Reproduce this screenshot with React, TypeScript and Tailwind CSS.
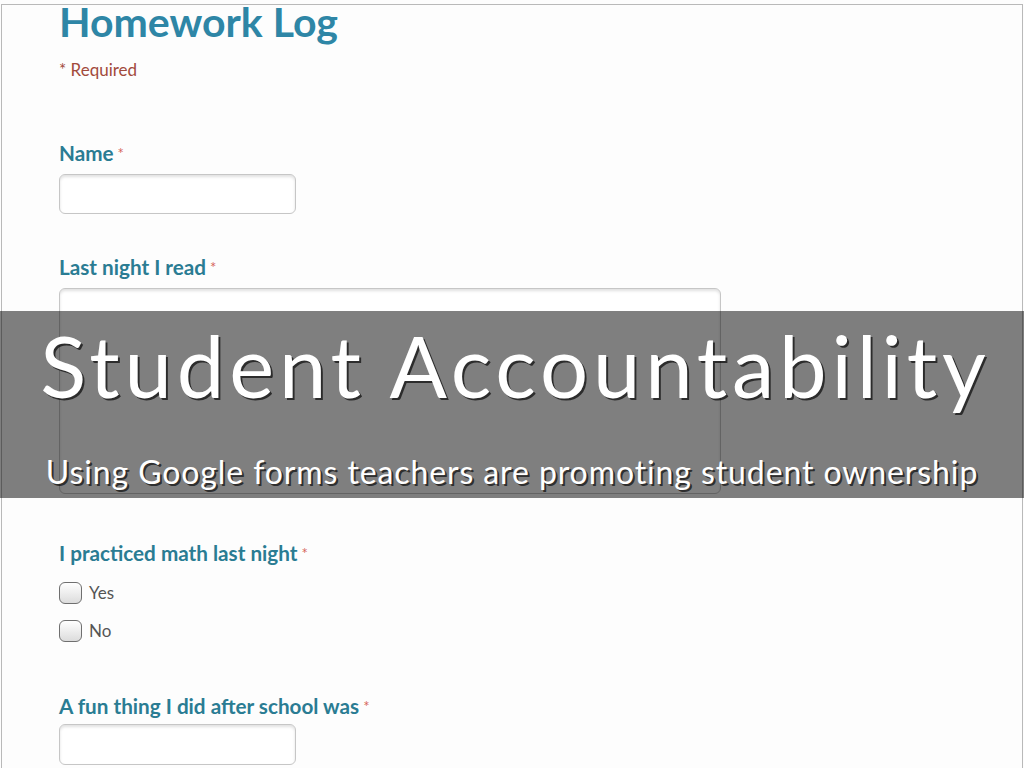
import React from 'react'

const label = "text-[20.7px] leading-[24px] font-bold text-[#2a7c93]"
const input = "w-[237px] rounded-[6px] border border-[#c6c6c6] bg-white shadow-[inset_0_2px_3px_rgba(0,0,0,0.12)]"

const Star = () => <span className="ml-[4px] align-top text-[15px] font-normal text-[#d6665a]">*</span>

const Check = ({ text }: { text: string }) => (
  <div className="flex items-center gap-[7px] h-[22px]">
    <div className="w-[23px] h-[22px] rounded-[6px] border-[1.5px] border-[#6f6f6f] bg-gradient-to-b from-white to-[#dcdcdc]" />
    <span className="text-[17px] text-[#555]">{text}</span>
  </div>
)

const App = () => {
  return (
    <div className="relative w-[1024px] h-[768px] overflow-hidden bg-[#fdfdfd] font-['Lato',sans-serif]">
      <div className="mt-[4px] mx-[1px] h-[764px] border-t border-x border-[#b9b9b9] pl-[57px]">
        <h1 className="-mt-[3px] text-[41px] leading-[40px] font-bold text-[#2e86a6]">Homework Log</h1>
        <p className="mt-[18px] text-[17px] leading-[20px] text-[#a24a3c]">* Required</p>

        <div className={`mt-[61px] ${label}`}>Name<Star /></div>
        <div className={`mt-[9px] h-[40px] ${input}`} />

        <div className={`mt-[41px] ${label}`}>Last night I read<Star /></div>
        <div className={`mt-[9px] h-[206px] w-[662px] ${input}`} />

        <div className={`mt-[47px] ${label}`}>I practiced math last night<Star /></div>
        <div className="mt-[17px] flex flex-col gap-[16px]">
          <Check text="Yes" />
          <Check text="No" />
        </div>

        <div className={`mt-[52px] ${label}`}>A fun thing I did after school was<Star /></div>
        <div className={`mt-[6px] h-[41px] ${input}`} />
      </div>

      <div className="absolute left-0 right-0 top-[311px] h-[187px] bg-black/50 flex flex-col items-center pt-[12px] text-white [text-shadow:2px_2px_0_rgba(0,0,0,0.65)] [font-variant-ligatures:none]">
        <div className="pl-[7px] text-[85px] leading-none whitespace-nowrap tracking-[4.8px]">Student Accountability</div>
        <div className="mt-[48px] text-[32px] leading-none whitespace-nowrap tracking-[0.9px]">Using Google forms teachers are promoting student ownership</div>
      </div>
    </div>
  )
}

export default App
